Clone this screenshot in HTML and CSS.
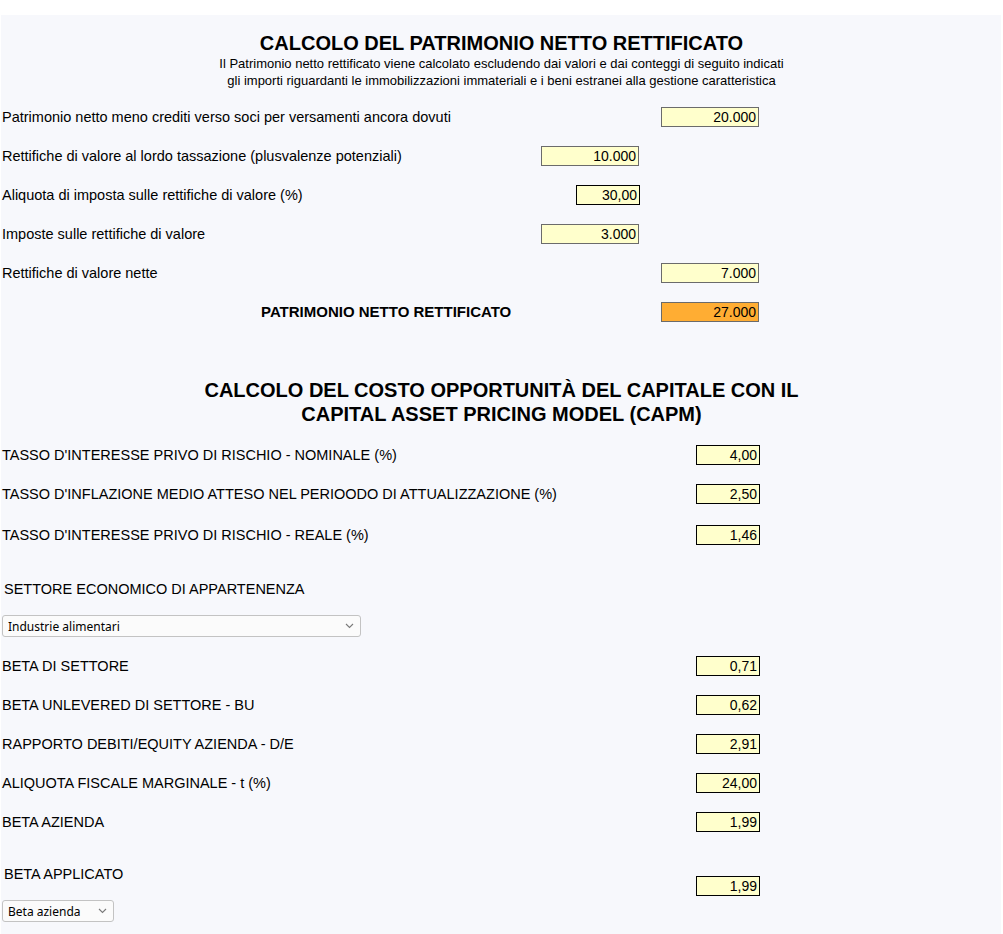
FILE: index.html
```html
<!DOCTYPE html>
<html lang="it">
<head>
<meta charset="utf-8">
<title>Patrimonio netto rettificato e CAPM</title>
<link rel="stylesheet" href="styles.css">
</head>
<body>
<div class="panel">
  <h1 class="title">CALCOLO DEL PATRIMONIO NETTO RETTIFICATO</h1>
  <p class="subtitle">Il Patrimonio netto rettificato viene calcolato escludendo dai valori e dai conteggi di seguito indicati<br>gli importi riguardanti le immobilizzazioni immateriali e i beni estranei alla gestione caratteristica</p>

  <div class="rows">
    <div class="row">
      <span class="label">Patrimonio netto meno crediti verso soci per versamenti ancora dovuti</span>
      <span class="mid"></span>
      <span class="right"><input class="box wide" value="20.000" readonly></span>
    </div>
    <div class="row">
      <span class="label">Rettifiche di valore al lordo tassazione (plusvalenze potenziali)</span>
      <span class="mid"><input class="box wide" value="10.000" readonly></span>
      <span class="right"></span>
    </div>
    <div class="row">
      <span class="label">Aliquota di imposta sulle rettifiche di valore (%)</span>
      <span class="mid"><input class="box narrow" value="30,00" readonly></span>
      <span class="right"></span>
    </div>
    <div class="row">
      <span class="label">Imposte sulle rettifiche di valore</span>
      <span class="mid"><input class="box wide" value="3.000" readonly></span>
      <span class="right"></span>
    </div>
    <div class="row">
      <span class="label">Rettifiche di valore nette</span>
      <span class="mid"></span>
      <span class="right"><input class="box wide" value="7.000" readonly></span>
    </div>
    <div class="row">
      <span class="label total">PATRIMONIO NETTO RETTIFICATO</span>
      <span class="mid"></span>
      <span class="right"><input class="box wide result" value="27.000" readonly></span>
    </div>
  </div>

  <h2 class="title second">CALCOLO DEL COSTO OPPORTUNITÀ DEL CAPITALE CON IL<br>CAPITAL ASSET PRICING MODEL (CAPM)</h2>

  <div class="rows">
    <div class="row">
      <span class="label">TASSO D'INTERESSE PRIVO DI RISCHIO - NOMINALE (%)</span>
      <span class="mid"></span>
      <span class="right"><input class="box narrow" value="4,00" readonly></span>
    </div>
    <div class="row">
      <span class="label">TASSO D'INFLAZIONE MEDIO ATTESO NEL PERIOODO DI ATTUALIZZAZIONE (%)</span>
      <span class="mid"></span>
      <span class="right"><input class="box narrow" value="2,50" readonly></span>
    </div>
    <div class="row shifted">
      <span class="label">TASSO D'INTERESSE PRIVO DI RISCHIO - REALE (%)</span>
      <span class="mid"></span>
      <span class="right"><input class="box narrow" value="1,46" readonly></span>
    </div>
  </div>

  <div class="choice first-choice">
    <div class="choice-left">
      <div class="choice-label">SETTORE ECONOMICO DI APPARTENENZA</div>
      <div class="select-wrap long">
        <select class="select"><option>Industrie alimentari</option></select>
        <svg class="chev" width="9" height="6" viewBox="0 0 9 6"><path d="M1 1 L4.5 4.5 L8 1" fill="none" stroke="#7a7a7a" stroke-width="1.1"/></svg>
      </div>
    </div>
  </div>

  <div class="rows beta-rows">
    <div class="row">
      <span class="label">BETA DI SETTORE</span>
      <span class="mid"></span>
      <span class="right"><input class="box narrow" value="0,71" readonly></span>
    </div>
    <div class="row">
      <span class="label">BETA UNLEVERED DI SETTORE - BU</span>
      <span class="mid"></span>
      <span class="right"><input class="box narrow" value="0,62" readonly></span>
    </div>
    <div class="row">
      <span class="label">RAPPORTO DEBITI/EQUITY AZIENDA - D/E</span>
      <span class="mid"></span>
      <span class="right"><input class="box narrow" value="2,91" readonly></span>
    </div>
    <div class="row">
      <span class="label">ALIQUOTA FISCALE MARGINALE - t (%)</span>
      <span class="mid"></span>
      <span class="right"><input class="box narrow" value="24,00" readonly></span>
    </div>
    <div class="row">
      <span class="label">BETA AZIENDA</span>
      <span class="mid"></span>
      <span class="right"><input class="box narrow" value="1,99" readonly></span>
    </div>
  </div>

  <div class="choice last-choice">
    <div class="choice-left">
      <div class="choice-label">BETA APPLICATO</div>
      <div class="select-wrap short">
        <select class="select"><option>Beta azienda</option></select>
        <svg class="chev" width="9" height="6" viewBox="0 0 9 6"><path d="M1 1 L4.5 4.5 L8 1" fill="none" stroke="#7a7a7a" stroke-width="1.1"/></svg>
      </div>
    </div>
    <div class="choice-right"><input class="box narrow" value="1,99" readonly></div>
  </div>
</div>
</body>
</html>
```

FILE: styles.css
```css
html, body {
  margin: 0;
  padding: 0;
  background: #ffffff;
}

body {
  font-family: "Liberation Sans", Arial, sans-serif;
  color: #000;
}

.panel {
  margin: 15px 0 0 1px;
  width: 1000px;
  min-height: 919px;
  background: #f7f8fc;
  padding: 16px 0 20px 1px;
  box-sizing: border-box;
}

.title {
  margin: 0;
  font-size: 20px;
  line-height: 24px;
  font-weight: bold;
  text-align: center;
  width: 999px;
}

.subtitle {
  margin: 0 0 8px 0;
  font-size: 13px;
  line-height: 17px;
  text-align: center;
  width: 999px;
}

.second {
  margin-top: 47px;
  margin-bottom: 9px;
}

.rows {
  display: flex;
  flex-direction: column;
}

.row {
  display: grid;
  grid-template-columns: 539px 99px 120px;
  height: 39px;
  align-items: center;
}

.row.shifted {
  margin-top: 2px;
}

.label {
  font-size: 14.5px;
  line-height: 18px;
  white-space: nowrap;
}

.label.total {
  font-weight: bold;
  font-size: 15px;
  padding-left: 259px;
}

.mid, .right {
  display: flex;
  justify-content: flex-end;
  align-items: center;
}

.box {
  box-sizing: border-box;
  height: 20px;
  margin: 0;
  padding: 0 2px 0 0;
  font-family: "Liberation Sans", Arial, sans-serif;
  font-size: 14px;
  line-height: 18px;
  color: #000;
  text-align: right;
  background: #ffffcc;
  outline: none;
}

.box.wide {
  width: 98px;
  margin-right: 1px;
  border: 1px solid #6b6b6b;
}

.box.narrow {
  width: 64px;
  border: 1px solid #000;
}

.box.result {
  background: #ffad33;
}

.choice {
  display: flex;
  align-items: flex-start;
  width: 758px;
}

.first-choice {
  margin-top: 25px;
}

.last-choice {
  margin-top: 23px;
}

.choice-left {
  flex: 1;
  display: flex;
  flex-direction: column;
  gap: 16px;
}

.choice-label {
  font-size: 14.5px;
  line-height: 20px;
  padding-left: 2px;
}

.choice-right {
  padding-top: 12px;
}

.beta-rows {
  margin-top: 9px;
}

.select-wrap {
  position: relative;
  height: 22px;
  margin-left: 0;
}

.select-wrap.long {
  width: 359px;
}

.select-wrap.short {
  width: 112px;
}

.select {
  -webkit-appearance: none;
  appearance: none;
  box-sizing: border-box;
  width: 100%;
  height: 22px;
  margin: 0;
  padding: 0 20px 0 5px;
  border: 1px solid #c3c3c3;
  border-radius: 3px;
  background: #fbfbfb;
  font-family: "Noto Sans", "Open Sans", sans-serif;
  font-size: 12px;
  color: #000;
  outline: none;
}

.chev {
  position: absolute;
  right: 7px;
  top: 8px;
  pointer-events: none;
}
```
